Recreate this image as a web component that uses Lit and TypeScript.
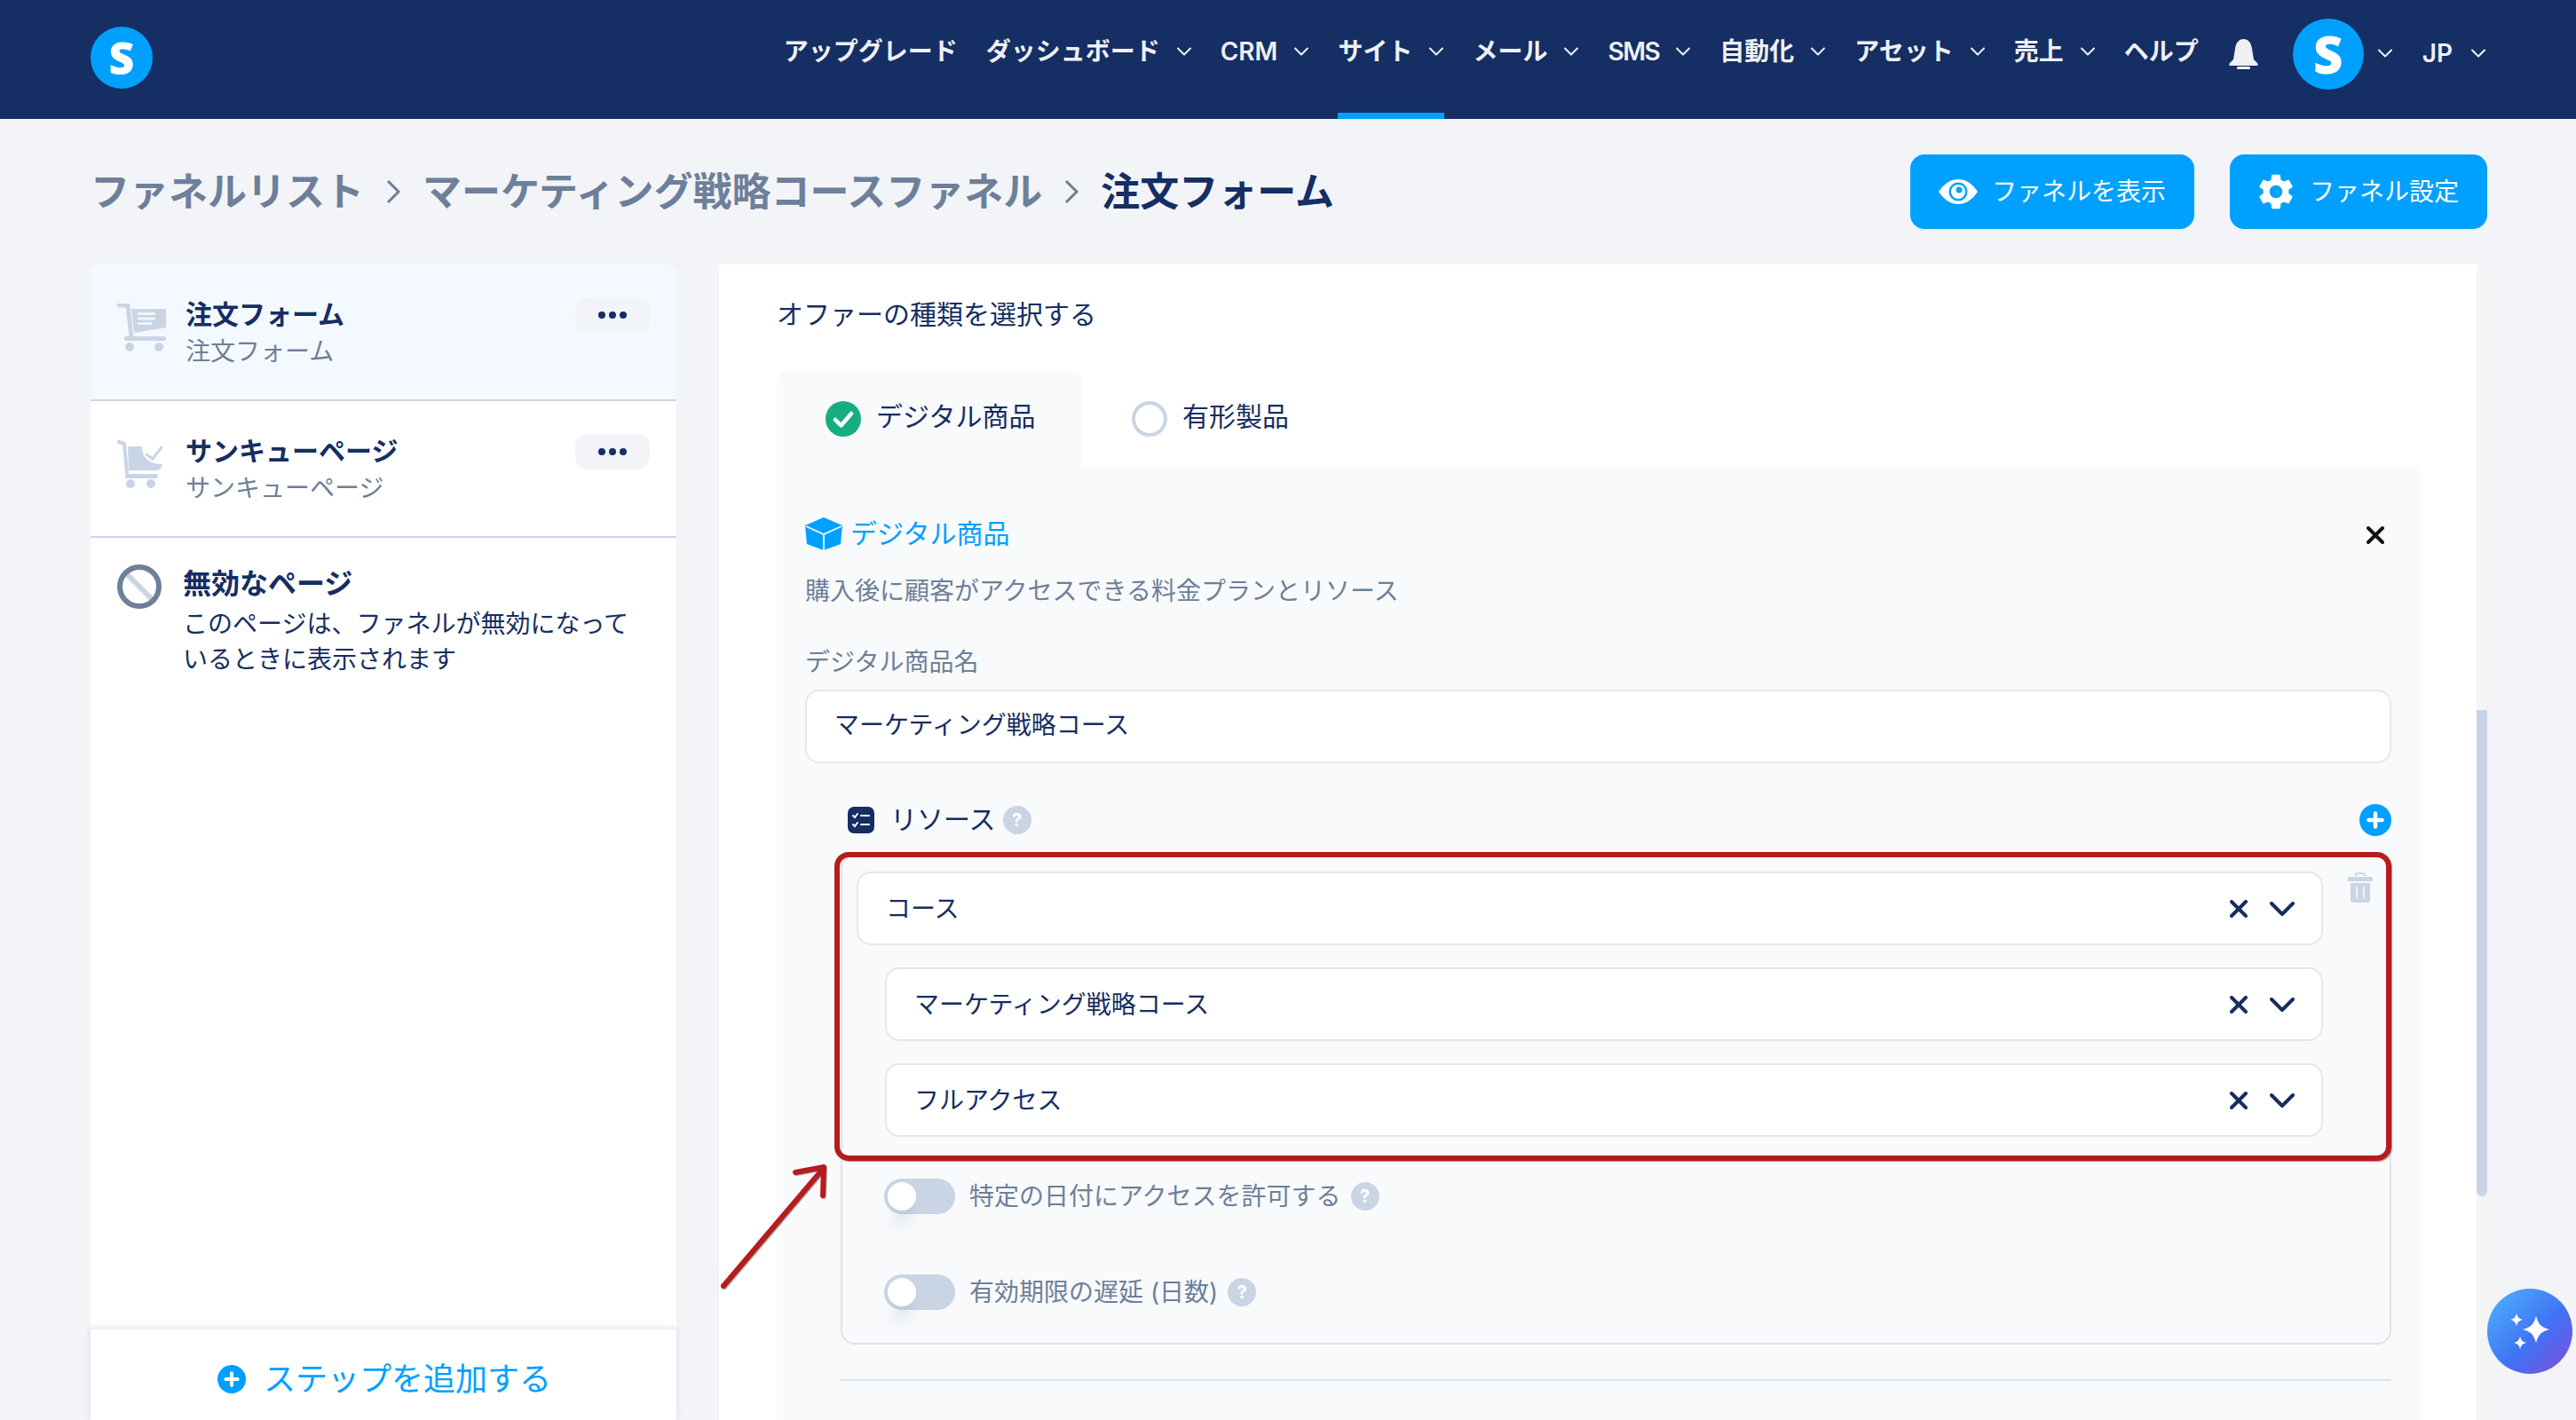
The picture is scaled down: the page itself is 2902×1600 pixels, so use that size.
import { LitElement, html, css } from "lit";
import { customElement } from "lit/decorators.js";

const chevron = html`<svg class="nav-chev" viewBox="0 0 18 10"><path d="M2 1.5 9 8.5 16 1.5" fill="none" stroke="currentColor" stroke-width="2" stroke-linecap="round" stroke-linejoin="round"/></svg>`;

const helpIcon = html`<span class="help">?</span>`;

const plusIcon = (size: number) => html`<svg width=${size} height=${size} viewBox="0 0 36 36">
  <circle cx="18" cy="18" r="18" fill="#00a0ff"/>
  <path d="M18 10.5v15M10.5 18h15" stroke="#fff" stroke-width="4.5" stroke-linecap="round"/>
</svg>`;

const orderCart = html`<svg class="step-icon" width="55" height="54" viewBox="0 0 55 54">
  <path d="M2 2h10l4 36" fill="none" stroke="#c9d5e5" stroke-width="5" stroke-linecap="round" stroke-linejoin="round"/>
  <path d="M16 6h39v21l-36 6z" fill="#c9d5e5"/>
  <path d="M23 11.5h20M23 17h20M23 22.5h16" stroke="#f4f9ff" stroke-width="2.4"/>
  <rect x="8" y="37" width="47" height="5" rx="2.5" fill="#c9d5e5"/>
  <circle cx="14" cy="49" r="5" fill="#c9d5e5"/><circle cx="47" cy="49" r="5" fill="#c9d5e5"/>
</svg>`;

const thanksCart = html`<svg class="step-icon" width="55" height="54" viewBox="0 0 55 54">
  <path d="M2 2 8 4l3 33" fill="none" stroke="#c9d5e5" stroke-width="4" stroke-linecap="round" stroke-linejoin="round"/>
  <path d="M12 7h16c0 13 8 20 23 20-1 4-3 7-7 7H13z" fill="#c9d5e5"/>
  <rect x="9" y="38" width="37" height="5" rx="2.5" fill="#c9d5e5"/>
  <circle cx="15" cy="49" r="5" fill="#c9d5e5"/><circle cx="38" cy="49" r="5" fill="#c9d5e5"/>
  <path d="M33 16l7 5 10-13" fill="none" stroke="#c9d5e5" stroke-width="3" stroke-linecap="round" stroke-linejoin="round"/>
</svg>`;

const selectIcons = html`<svg class="sel-x" viewBox="0 0 20 20"><path d="M2 2l16 16M18 2 2 18" stroke="#152e63" stroke-width="4" stroke-linecap="round"/></svg>
  <svg class="sel-chev" viewBox="0 0 28 16"><path d="M2 2l12 12L26 2" fill="none" stroke="#152e63" stroke-width="4" stroke-linecap="round" stroke-linejoin="round"/></svg>`;

const star = (cx: number, cy: number, r: number) =>
  `M${cx} ${cy - r}C${cx + r * 0.2} ${cy - r * 0.35} ${cx + r * 0.35} ${cy - r * 0.2} ${cx + r} ${cy}C${cx + r * 0.35} ${cy + r * 0.2} ${cx + r * 0.2} ${cy + r * 0.35} ${cx} ${cy + r}C${cx - r * 0.2} ${cy + r * 0.35} ${cx - r * 0.35} ${cy + r * 0.2} ${cx - r} ${cy}C${cx - r * 0.35} ${cy - r * 0.2} ${cx - r * 0.2} ${cy - r * 0.35} ${cx} ${cy - r}Z`;

const navItems = [
  { label: "アップグレード" },
  { label: "ダッシュボード", menu: true },
  { label: "CRM", menu: true },
  { label: "サイト", menu: true, active: true },
  { label: "メール", menu: true },
  { label: "SMS", menu: true, tight: true },
  { label: "自動化", menu: true },
  { label: "アセット", menu: true },
  { label: "売上", menu: true },
  { label: "ヘルプ" },
];

@customElement("app-root")
export class AppRoot extends LitElement {
  static styles = css`
    :host {
      display: block;
      position: relative;
      width: 2902px;
      height: 1600px;
      overflow: hidden;
      background: #f2f4f8;
      color: #152e63;
      font-family: Inter, "Noto Sans CJK JP", sans-serif;
      font-size: 28px;
      line-height: 40px;
    }
    svg {
      display: block;
      flex: none;
    }

    /* top bar */
    .topbar {
      height: 134px;
      background: #152e63;
      display: flex;
      align-items: flex-start;
      padding: 0 101px 0 102px;
      box-sizing: border-box;
      color: #eef0f4;
    }
    .logo {
      width: 70px;
      height: 70px;
      margin-top: 30px;
      border-radius: 50%;
      background: #00a0ff;
      color: #fff;
      font: 800 50px/70px "Open Sans", sans-serif;
      text-align: center;
    }
    .nav {
      margin-left: auto;
      display: flex;
      gap: 32px;
      font-weight: 600;
    }
    .nav-item {
      height: 134px;
      box-sizing: border-box;
      display: flex;
      align-items: center;
      gap: 18px;
      padding-bottom: 12px;
      border-bottom: 7px solid transparent;
      white-space: nowrap;
    }
    .nav-item.active {
      border-bottom-color: #00a0ff;
    }
    .nav-item.tight span {
      letter-spacing: -1.5px;
    }
    .nav-chev {
      width: 18px;
      height: 10px;
    }
    .bell {
      margin: 44px 0 0 34px;
    }
    .avatar {
      width: 80px;
      height: 80px;
      margin: 21px 0 0 39px;
      border-radius: 50%;
      background: #00a0ff;
      color: #fff;
      font: 800 58px/80px "Open Sans", sans-serif;
      text-align: center;
    }
    .account {
      height: 120px;
      display: flex;
      align-items: center;
      gap: 18px;
      font-weight: 600;
    }
    .account.user {
      margin-left: 15px;
    }
    .account.lang {
      margin-left: 33px;
      gap: 20px;
    }

    /* breadcrumb row */
    .crumbs {
      height: 164px;
      display: flex;
      align-items: center;
      padding: 0 100px 0 102px;
      box-sizing: border-box;
      font-size: 44px;
      font-weight: 700;
      color: #6e7f99;
      white-space: nowrap;
    }
    .crumb-sep {
      width: 18px;
      height: 30px;
      margin: 0 24px;
    }
    .crumb-now {
      color: #152e63;
    }
    .crumb-actions {
      margin-left: auto;
      display: flex;
      gap: 40px;
    }
    .btn {
      height: 84px;
      display: flex;
      align-items: center;
      box-sizing: border-box;
      border-radius: 16px;
      background: #00a0ff;
      color: #fff;
      font-size: 28px;
      font-weight: 400;
    }
    .btn.view {
      width: 320px;
      padding-left: 32px;
      gap: 16px;
    }
    .btn.settings {
      width: 290px;
      padding-left: 32px;
      gap: 18px;
    }

    /* columns */
    .columns {
      display: flex;
      height: 1302px;
      padding-left: 102px;
      gap: 48px;
    }

    /* step list */
    .steps {
      width: 660px;
      display: flex;
      flex-direction: column;
      background: #fff;
      border-radius: 12px 12px 0 0;
    }
    .step {
      height: 154px;
      box-sizing: border-box;
      display: flex;
      align-items: flex-start;
      padding: 36px 30px 0;
      gap: 22px;
      border-bottom: 2px solid #ccd6e6;
    }
    .step.current {
      background: #f4f9ff;
      border-radius: 12px 12px 0 0;
    }
    .step-icon {
      margin-top: 8px;
    }
    .step-text {
      flex: 1;
    }
    .step-title {
      font-size: 30px;
      font-weight: 700;
    }
    .step-sub {
      margin-top: 2px;
      color: #6e7f99;
    }
    .dots {
      width: 84px;
      height: 40px;
      margin-top: 1px;
      border-radius: 14px;
      background: #f2f4f8;
      display: flex;
      align-items: center;
      justify-content: center;
      gap: 4px;
    }
    .dots i {
      width: 8px;
      height: 8px;
      border-radius: 50%;
      background: #152e63;
    }
    .disabled-page {
      flex: 1;
      display: flex;
      gap: 24px;
      padding: 30px 30px 0;
    }
    .disabled-title {
      font-size: 32px;
      font-weight: 700;
      line-height: 44px;
      margin-bottom: 3px;
    }
    .disabled-desc {
      width: 520px;
    }
    .add-step {
      height: 104px;
      box-sizing: border-box;
      border-top: 2px solid #f0f1f3;
      box-shadow: 0 0 6px rgba(60, 70, 90, 0.16);
      background: #fff;
      display: flex;
      align-items: center;
      justify-content: center;
      gap: 20px;
      color: #00a0ff;
      font-size: 36px;
      padding: 10px 0 0 2px;
    }

    /* offer card */
    .card {
      width: 1980px;
      box-sizing: border-box;
      background: #fff;
      padding: 36px 64px 0 65px;
      overflow: hidden;
    }
    .scrollbar {
      width: 12px;
      margin-left: -48px;
      background: #f5f5f5;
    }
    .thumb {
      margin-top: 502px;
      height: 548px;
      background: #c9d5e5;
      border-radius: 0 0 6px 6px;
    }
    .card-title {
      font-size: 30px;
    }
    .tabs {
      display: flex;
      margin-top: 44px;
      font-size: 30px;
    }
    .tab {
      height: 107px;
      display: flex;
      align-items: center;
      gap: 17px;
      box-sizing: border-box;
    }
    .tab span {
      margin-bottom: 6px;
    }
    .tab.on {
      width: 344px;
      padding-left: 55px;
      background: #f8fafc;
      border-radius: 12px 12px 0 0;
    }
    .tab.off {
      padding-left: 56px;
    }
    .radio {
      width: 40px;
      height: 40px;
      box-sizing: border-box;
      border-radius: 50%;
      border: 4px solid #c9d5e5;
    }
    .panel {
      background: #f8fafc;
      padding: 56px 32px 0;
      height: 1100px;
    }
    .panel-head {
      display: flex;
      align-items: center;
      gap: 9px;
      color: #00a0ff;
      font-size: 30px;
    }
    .panel-close {
      margin: 3px 7px 0 auto;
    }
    .panel-desc {
      margin-top: 25px;
      color: #6e7f99;
    }
    .field-label {
      margin-top: 40px;
      color: #6e7f99;
    }
    .field {
      height: 83px;
      box-sizing: border-box;
      margin-top: 11px;
      padding: 0 31px 4px;
      display: flex;
      align-items: center;
      background: #fff;
      border: 2px solid #e3e8ec;
      border-radius: 16px;
    }
    .res-head {
      margin: 46px 0 0 48px;
      height: 36px;
      display: flex;
      align-items: center;
      gap: 18px;
      font-size: 30px;
    }
    .res-title {
      margin: 0 -10px 3px 0;
    }
    .res-add {
      margin-left: auto;
    }
    .help {
      width: 32px;
      height: 32px;
      flex: none;
      border-radius: 50%;
      background: #c9d5e5;
      color: #fff;
      font-size: 20px;
      font-weight: 700;
      line-height: 32px;
      text-align: center;
    }
    .res-box {
      margin: 20px 0 0 40px;
      padding: 18px 19px 37px 16px;
      border: 2px solid #dde3ea;
      border-radius: 16px;
    }
    .res-row {
      display: flex;
      gap: 28px;
      align-items: flex-start;
    }
    .sel {
      flex: 1;
      height: 83px;
      box-sizing: border-box;
      display: flex;
      align-items: center;
      padding: 0 30px 0 31px;
      background: #fff;
      border: 2px solid #e3e8ec;
      border-radius: 16px;
    }
    .sel-sub {
      margin: 25px 56px 0 32px;
    }
    .sel-text {
      flex: 1;
    }
    .sel-x {
      width: 20px;
      height: 20px;
    }
    .sel-chev {
      width: 28px;
      height: 16px;
      margin-left: 25px;
    }
    .trash {
      margin-top: 1px;
    }
    .opt {
      display: flex;
      align-items: center;
      margin-left: 31px;
      gap: 16px;
      color: #6e7f99;
    }
    .opt.first {
      margin-top: 47px;
    }
    .opt.second {
      margin-top: 68px;
    }
    .toggle {
      width: 80px;
      height: 40px;
      padding: 4px;
      box-sizing: border-box;
      border-radius: 20px;
      background: #c9d5e5;
    }
    .toggle i {
      display: block;
      width: 32px;
      height: 32px;
      border-radius: 50%;
      background: #fff;
      box-shadow: 0 22px 14px -4px rgba(110, 127, 153, 0.12);
    }
    .opt-label {
      margin-right: -5px;
    }
    .divider {
      margin: 39px 0 0 39px;
      height: 2px;
      background: #dde3ea;
    }

    /* annotation drawn over the page */
    .callout {
      position: absolute;
      left: 940px;
      top: 960px;
      width: 1754px;
      height: 348px;
      box-sizing: border-box;
      border: 6px solid #b71c1c;
      border-radius: 16px;
      box-shadow: 1px 1px 1px rgba(60, 60, 60, 0.5);
    }
    .arrow {
      position: absolute;
      left: 805px;
      top: 1305px;
      filter: drop-shadow(1px 1px 0.5px rgba(60, 60, 60, 0.45));
    }
    .assistant {
      position: absolute;
      left: 2802px;
      top: 1452px;
      width: 96px;
      height: 96px;
      border-radius: 50%;
      background: linear-gradient(135deg, #4ea9f9 10%, #3f74f6 55%, #7c4fde 95%);
    }
  `;

  render() {
    return html`
      <div class="topbar">
        <div class="logo">S</div>
        <nav class="nav">
          ${navItems.map(
            (n) => html`<div class="nav-item ${n.active ? "active" : ""} ${n.tight ? "tight" : ""}">
              <span>${n.label}</span>${n.menu ? chevron : ""}
            </div>`
          )}
        </nav>
        <svg class="bell" width="33" height="34" viewBox="0 0 33 34" fill="#eef0f4">
          <path d="M16.5 0C22 0 25 4 26 11l2 12 4.500 4.500V30H.5v-2.500L5 23l2-12C8 4 11 0 16.500 0Z"/>
          <rect x="9" y="31" width="15" height="3.500" rx="1.500"/>
        </svg>
        <div class="avatar">S</div>
        <div class="account user">${chevron}</div>
        <div class="account lang"><span>JP</span>${chevron}</div>
      </div>

      <div class="crumbs">
        <span>ファネルリスト</span>
        <svg class="crumb-sep" viewBox="0 0 18 30"><path d="M3 3l12 12L3 27" fill="none" stroke="#6e7f99" stroke-width="3"/></svg>
        <span>マーケティング戦略コースファネル</span>
        <svg class="crumb-sep" viewBox="0 0 18 30"><path d="M3 3l12 12L3 27" fill="none" stroke="#6e7f99" stroke-width="3"/></svg>
        <span class="crumb-now">注文フォーム</span>
        <div class="crumb-actions">
          <div class="btn view">
            <svg width="44" height="28" viewBox="0 0 44 28">
              <path d="M0 14C7 4 14 0 22 0s15 4 22 14c-7 10-14 14-22 14S7 24 0 14Z" fill="#fff"/>
              <circle cx="22" cy="14" r="10.500" fill="#00a0ff"/>
              <circle cx="22" cy="14" r="8" fill="#fff"/>
              <circle cx="23" cy="12" r="3.500" fill="#00a0ff"/>
            </svg>
            <span>ファネルを表示</span>
          </div>
          <div class="btn settings">
            <svg width="40" height="40" viewBox="2.500 2 19 20" fill="#fff">
              <path d="M19.140 12.940c.04-.3.06-.61.06-.94 0-.32-.02-.64-.07-.94l2.030-1.580c.18-.14.23-.41.12-.61l-1.920-3.320c-.12-.22-.37-.29-.59-.22l-2.390.96c-.5-.38-1.030-.7-1.620-.94l-.36-2.540c-.04-.24-.24-.41-.48-.41h-3.840c-.24 0-.43.17-.47.41l-.36 2.540c-.59.24-1.130.57-1.620.94l-2.390-.96c-.22-.08-.47 0-.59.22L2.740 8.870c-.12.21-.08.47.12.61l2.030 1.580c-.05.3-.09.63-.09.94s.02.64.07.94l-2.030 1.580c-.18.14-.23.41-.12.61l1.920 3.320c.12.22.37.29.59.22l2.390-.96c.5.38 1.030.7 1.620.94l.36 2.540c.05.24.24.41.48.41h3.840c.24 0 .44-.17.47-.41l.36-2.540c.59-.24 1.130-.56 1.620-.94l2.390.96c.22.08.47 0 .59-.22l1.920-3.320c.12-.22.07-.47-.12-.61l-2.010-1.580zM12 15.600c-1.980 0-3.600-1.620-3.600-3.600s1.620-3.600 3.600-3.600 3.600 1.620 3.600 3.600-1.620 3.600-3.600 3.600z"/>
            </svg>
            <span>ファネル設定</span>
          </div>
        </div>
      </div>

      <div class="columns">
        <aside class="steps">
          <div class="step current">
            ${orderCart}
            <div class="step-text">
              <div class="step-title">注文フォーム</div>
              <div class="step-sub">注文フォーム</div>
            </div>
            <div class="dots"><i></i><i></i><i></i></div>
          </div>
          <div class="step">
            ${thanksCart}
            <div class="step-text">
              <div class="step-title">サンキューページ</div>
              <div class="step-sub">サンキューページ</div>
            </div>
            <div class="dots"><i></i><i></i><i></i></div>
          </div>
          <div class="disabled-page">
            <svg width="50" height="50" viewBox="0 0 50 50">
              <path d="M10 10l30 30" stroke="#c9d5e5" stroke-width="6"/>
              <circle cx="25" cy="25" r="22" fill="none" stroke="#6e7f99" stroke-width="6"/>
            </svg>
            <div>
              <div class="disabled-title">無効なページ</div>
              <div class="disabled-desc">このページは、ファネルが無効になっているときに表示されます</div>
            </div>
          </div>
          <div class="add-step">${plusIcon(32)}<span>ステップを追加する</span></div>
        </aside>

        <main class="card">
          <div class="card-title">オファーの種類を選択する</div>
          <div class="tabs">
            <div class="tab on">
              <svg width="40" height="40" viewBox="0 0 40 40">
                <circle cx="20" cy="20" r="20" fill="#17ae7f"/>
                <path d="M11 21l6.500 6.500L29 14" fill="none" stroke="#fff" stroke-width="4.500" stroke-linecap="round" stroke-linejoin="round"/>
              </svg>
              <span>デジタル商品</span>
            </div>
            <div class="tab off">
              <div class="radio"></div>
              <span>有形製品</span>
            </div>
          </div>

          <div class="panel">
            <div class="panel-head">
              <svg width="42" height="37" viewBox="0 0 42 37">
                <path d="M21 0 42 9l-2 21-19 7-19-7L0 9Z" fill="#00a0ff"/>
                <path d="M1 10l20 9 20-9M21 19v18" fill="none" stroke="#f8fafc" stroke-width="1.800"/>
              </svg>
              <span>デジタル商品</span>
              <svg class="panel-close" width="22" height="22" viewBox="0 0 22 22">
                <path d="M3 3l16 16M19 3 3 19" stroke="#111" stroke-width="4" stroke-linecap="round"/>
              </svg>
            </div>
            <div class="panel-desc">購入後に顧客がアクセスできる料金プランとリソース</div>
            <div class="field-label">デジタル商品名</div>
            <div class="field">マーケティング戦略コース</div>

            <div class="res-head">
              <svg width="30" height="30" viewBox="0 0 30 30">
                <rect width="30" height="30" rx="7" fill="#152e63"/>
                <path d="M6 10l2 2 3-4M6 20l2 2 3-4M15 10h9M15 20h9" fill="none" stroke="#fff" stroke-width="2" stroke-linecap="round"/>
              </svg>
              <span class="res-title">リソース</span>
              ${helpIcon}
              <span class="res-add">${plusIcon(36)}</span>
            </div>

            <div class="res-box">
              <div class="res-row">
                <div class="sel"><span class="sel-text">コース</span>${selectIcons}</div>
                <svg class="trash" width="28" height="34" viewBox="0 0 28 34" fill="#c9d5e5">
                  <path d="M9 4V3a2 2 0 0 1 2-2h6a2 2 0 0 1 2 2v1" fill="none" stroke="#c9d5e5" stroke-width="2"/>
                  <rect y="5" width="28" height="5" rx="1.500"/>
                  <path d="M3 12h22v20a2 2 0 0 1-2 2H5a2 2 0 0 1-2-2Z"/>
                  <path d="M10 16v13M18 16v13" stroke="#f8fafc" stroke-width="1.500"/>
                </svg>
              </div>
              <div class="sel sel-sub"><span class="sel-text">マーケティング戦略コース</span>${selectIcons}</div>
              <div class="sel sel-sub"><span class="sel-text">フルアクセス</span>${selectIcons}</div>

              <div class="opt first">
                <div class="toggle"><i></i></div>
                <span class="opt-label">特定の日付にアクセスを許可する</span>${helpIcon}
              </div>
              <div class="opt second">
                <div class="toggle"><i></i></div>
                <span class="opt-label">有効期限の遅延 (日数)</span>${helpIcon}
              </div>
            </div>
            <div class="divider"></div>
          </div>
        </main>
        <div class="scrollbar"><div class="thumb"></div></div>
      </div>

      <div class="callout"></div>
      <svg class="arrow" width="140" height="150" viewBox="805 1305 140 150">
        <path d="M815 1449 928 1316M896 1321l32-6-1 32" fill="none" stroke="#b71c1c" stroke-width="6" stroke-linecap="round" stroke-linejoin="round"/>
      </svg>
      <div class="assistant">
        <svg width="96" height="96" viewBox="0 0 96 96" fill="#fff">
          <path d=${star(55, 46, 15)}/>
          <path d=${star(33, 35, 7)}/>
          <path d=${star(37, 61, 7)}/>
        </svg>
      </div>
    `;
  }
}
